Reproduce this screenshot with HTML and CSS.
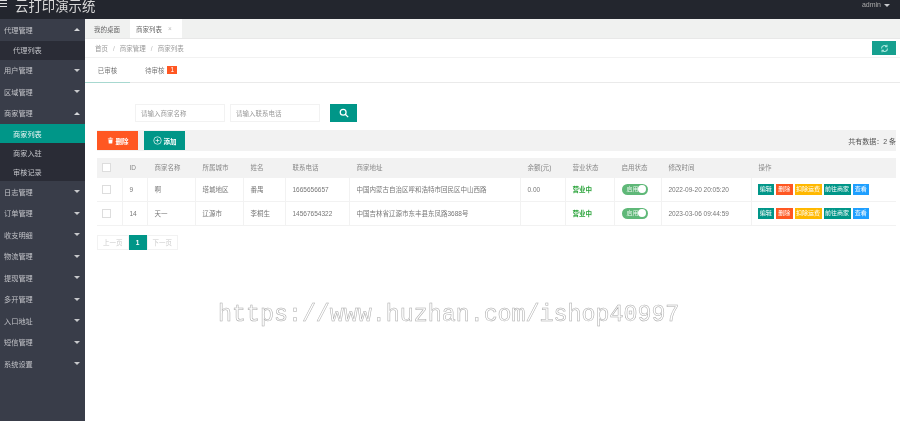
FILE: index.html
```html
<!DOCTYPE html>
<html lang="zh">
<head>
  <meta charset="UTF-8" />
  <meta name="viewport" content="width=device-width, initial-scale=1.0"/>
  <title>云打印演示统</title>
  <link rel="stylesheet" href="styles.css">
</head>
<body>
  <!-- 顶部 -->
  <div class="header">
    <div class="burger"><i></i><i></i><i></i></div>
    <div class="logo">云打印演示统</div>
    <div class="user">admin <span class="arrow-down"></span></div>
  </div>

  <div class="main">
    <!-- 左侧菜单 -->
    <div class="side">
      <div class="nav-item">代理管理<span class="arrow-up"></span></div>
      <div class="nav-sub">代理列表</div>
      <div class="nav-item">用户管理<span class="arrow-down"></span></div>
      <div class="nav-item">区域管理<span class="arrow-down"></span></div>
      <div class="nav-item">商家管理<span class="arrow-up"></span></div>
      <div class="nav-sub active">商家列表</div>
      <div class="nav-sub">商家入驻</div>
      <div class="nav-sub">审核记录</div>
      <div class="nav-item">日志管理<span class="arrow-down"></span></div>
      <div class="nav-item">订单管理<span class="arrow-down"></span></div>
      <div class="nav-item">收支明细<span class="arrow-down"></span></div>
      <div class="nav-item">物流管理<span class="arrow-down"></span></div>
      <div class="nav-item">提现管理<span class="arrow-down"></span></div>
      <div class="nav-item">多开管理<span class="arrow-down"></span></div>
      <div class="nav-item">入口地址<span class="arrow-down"></span></div>
      <div class="nav-item">短信管理<span class="arrow-down"></span></div>
      <div class="nav-item">系统设置<span class="arrow-down"></span></div>
    </div>

    <!-- 内容 -->
    <div class="content">
      <div class="page-tabs">
        <div class="page-tab">我的桌面</div>
        <div class="page-tab current">商家列表 <span class="close">×</span></div>
      </div>

      <div class="crumb">
        <span>首页</span><em>/</em><span>商家管理</span><em>/</em><span>商家列表</span>
        <button class="refresh">
          <svg width="9" height="9" viewBox="0 0 24 24" fill="none" stroke="#a8e6dd" stroke-width="3">
            <path d="M4 12a8 8 0 0 1 14-5.300M20 12a8 8 0 0 1-14 5.300"/>
            <path d="M18.500 2v5h-5M5.500 22v-5h5"/>
          </svg>
        </button>
      </div>

      <div class="sub-tabs">
        <div class="sub-tab current">已审核</div>
        <div class="sub-tab">待审核<span class="badge">1</span></div>
      </div>

      <div class="search">
        <input type="text" placeholder="请输入商家名称">
        <input type="text" placeholder="请输入联系电话">
        <button class="search-btn">
          <svg width="10" height="10" viewBox="0 0 24 24" fill="none" stroke="#fff" stroke-width="3">
            <circle cx="10" cy="10" r="7"/>
            <path d="M15 15l7 7"/>
          </svg>
        </button>
      </div>

      <div class="toolbar">
        <button class="btn btn-del">
          <svg width="7" height="7" viewBox="0 0 24 24" fill="#fff"><path d="M3 5h18v3H3zM9 2h6v2H9zM5 9h14l-1 13H6z"/></svg>
          删除
        </button>
        <button class="btn btn-add">
          <svg width="9" height="9" viewBox="0 0 24 24" fill="none" stroke="#fff" stroke-width="1.800"><circle cx="12" cy="12" r="10"/><path d="M12 7v10M7 12h10"/></svg>
          添加
        </button>
        <span class="total">共有数据：2 条</span>
      </div>

      <table class="list">
        <colgroup>
          <col class="c-check"><col class="c-id"><col class="c-name"><col class="c-city"><col class="c-person">
          <col class="c-phone"><col class="c-addr"><col class="c-money"><col class="c-open"><col class="c-state">
          <col class="c-time"><col>
        </colgroup>
        <thead>
          <tr>
            <th><span class="check"></span></th>
            <th>ID</th><th>商家名称</th><th>所属城市</th><th>姓名</th><th>联系电话</th><th>商家地址</th>
            <th>余额(元)</th><th>营业状态</th><th>启用状态</th><th>修改时间</th><th>操作</th>
          </tr>
        </thead>
        <tbody>
          <tr>
            <td><span class="check"></span></td>
            <td>9</td><td>啊</td><td>塔城地区</td><td>番禺</td><td>1665656657</td>
            <td>中国内蒙古自治区呼和浩特市回民区中山西路</td><td>0.00</td>
            <td class="open">营业中</td>
            <td><span class="switch">启用<i></i></span></td>
            <td>2022-09-20 20:05:20</td>
            <td class="ops"><b class="op green">编辑</b><b class="op orange">删除</b><b class="op yellow">扣除运费</b><b class="op green">前往商家</b><b class="op blue">查看</b></td>
          </tr>
          <tr>
            <td><span class="check"></span></td>
            <td>14</td><td>天一</td><td>辽源市</td><td>李桐生</td><td>14567654322</td>
            <td>中国吉林省辽源市东丰县东凤路3688号</td><td></td>
            <td class="open">营业中</td>
            <td><span class="switch">启用<i></i></span></td>
            <td>2023-03-06 09:44:59</td>
            <td class="ops"><b class="op green">编辑</b><b class="op orange">删除</b><b class="op yellow">扣除运费</b><b class="op green">前往商家</b><b class="op blue">查看</b></td>
          </tr>
        </tbody>
      </table>

      <div class="pager">
        <span class="page">上一页</span><span class="page now">1</span><span class="page">下一页</span>
      </div>
    </div>
  </div>

  <!-- 水印 -->
  <div class="mark">https://www.huzhan.com/ishop40997</div>
</body>
</html>
```

FILE: styles.css
```css
* {
  box-sizing: border-box;
}
body {
  margin: 0;
  height: 421px;
  overflow: hidden;
  display: flex;
  flex-direction: column;
  font-family: "Liberation Sans", "Noto Sans CJK SC", sans-serif;
  font-size: 6.5px;
  color: #777;
  background: #fff;
  filter: blur(0.35px);
}
button {
  border: none;
  padding: 0;
  font-family: inherit;
}

/* header */
.header {
  height: 19px;
  flex: none;
  display: flex;
  align-items: flex-start;
  background: #23262e;
}
.burger {
  width: 7px;
  margin-right: 8px;
  display: flex;
  flex-direction: column;
  gap: 2px;
}
.burger i {
  height: 1px;
  background: #ddd;
}
.logo {
  font-size: 13.4px;
  line-height: 13px;
  color: #d8d8d8;
}
.user {
  margin-left: auto;
  margin-right: 10px;
  line-height: 10px;
  font-size: 7px;
  color: #aaa;
  display: flex;
  align-items: center;
  gap: 3px;
}
.arrow-down,
.arrow-up {
  width: 0;
  height: 0;
  border-left: 3px solid transparent;
  border-right: 3px solid transparent;
}
.arrow-down {
  border-top: 3px solid #c8c9cc;
}
.arrow-up {
  border-bottom: 3px solid #d6d7da;
}

.main {
  flex: 1;
  display: flex;
  min-height: 0;
}

/* sidebar */
.side {
  width: 85px;
  flex: none;
  background: #393d49;
  color: #c2c3c8;
  font-size: 7.2px;
}
.nav-item {
  height: 21.5px;
  padding: 0 5px 0 4px;
  display: flex;
  align-items: center;
  justify-content: space-between;
}
.nav-sub {
  height: 19px;
  padding-left: 13px;
  display: flex;
  align-items: center;
  background: #2a2c36;
}
.nav-sub.active {
  background: #009688;
  color: #e6f5f3;
}

/* content */
.content {
  flex: 1;
  min-width: 0;
  display: flex;
  flex-direction: column;
}
.page-tabs {
  height: 20px;
  flex: none;
  display: flex;
  background: #f0f1f0;
  border-bottom: 1px solid #e8e8e8;
}
.page-tab {
  width: 45px;
  padding-left: 9px;
  display: flex;
  align-items: center;
  color: #666;
  white-space: nowrap;
}
.page-tab.current {
  width: 52px;
  gap: 6px;
  padding-left: 6px;
  background: #fff;
}
.close {
  color: #bbb;
}
.crumb {
  height: 19px;
  flex: none;
  padding: 0 4px 0 10px;
  display: flex;
  align-items: center;
  border-bottom: 1px solid #f2f2f2;
  color: #999;
}
.crumb em {
  margin: 0 5px;
  font-style: normal;
  color: #bbb;
}
.refresh {
  width: 24px;
  height: 14px;
  margin-left: auto;
  background: #16a08f;
  display: flex;
  align-items: center;
  justify-content: center;
}
.sub-tabs {
  height: 25px;
  flex: none;
  display: flex;
  border-bottom: 1px solid #eaeaea;
}
.sub-tab {
  width: 45px;
  display: flex;
  align-items: center;
  justify-content: center;
  color: #777;
}
.sub-tab.current {
  border-bottom: 1px solid #a7d8d0;
  margin-bottom: -1px;
}
.sub-tab + .sub-tab {
  width: 62px;
}
.badge {
  margin-left: 3px;
  padding: 0 3px;
  line-height: 8px;
  background: #ff5722;
  color: #fff;
}
.search {
  flex: none;
  margin: 21px 0 0 50px;
  height: 18px;
  display: flex;
}
.search input {
  width: 90px;
  height: 18px;
  margin-right: 5px;
  padding: 0 5px;
  border: 1px solid #f2f2f2;
  outline: none;
  font: inherit;
}
.search input::placeholder {
  color: #999;
}
.search-btn {
  width: 27px;
  height: 18px;
  margin-left: 5px;
  background: #009688;
  display: flex;
  align-items: center;
  justify-content: center;
}
.toolbar {
  flex: none;
  margin: 8px 4px 0 12px;
  height: 21px;
  background: #f2f2f2;
  display: flex;
  align-items: center;
  gap: 6px;
}
.btn {
  width: 41px;
  height: 19px;
  display: flex;
  align-items: center;
  justify-content: center;
  gap: 2px;
  color: #fff;
  font-size: 6.5px;
  font-weight: bold;
}
.btn-del {
  background: #ff5722;
}
.btn-add {
  background: #009688;
}
.total {
  margin-left: auto;
  font-size: 7px;
  color: #555;
}

/* table */
.list {
  flex: none;
  width: 799px;
  margin: 7px 0 0 12px;
  border-collapse: collapse;
  table-layout: fixed;
}
.c-check { width: 25px; }
.c-id { width: 25px; }
.c-name { width: 48px; }
.c-city { width: 48px; }
.c-person { width: 42px; }
.c-phone { width: 64px; }
.c-addr { width: 171px; }
.c-money { width: 45px; }
.c-open { width: 49px; }
.c-state { width: 47px; }
.c-time { width: 90px; }
.list th,
.list td {
  padding: 0 7px;
  text-align: left;
  font-weight: normal;
  white-space: nowrap;
  border-bottom: 1px solid #f2f2f2;
  border-right: 1px solid #f2f2f2;
}
.list th {
  height: 19px;
  background: #f2f2f2;
  color: #888;
}
.list td {
  height: 24px;
}
.list th:first-child,
.list td:first-child {
  padding: 0 0 0 5px;
}
.check {
  display: block;
  width: 9px;
  height: 9px;
  border: 1px solid #ddd;
  background: #fff;
}
.list .open {
  color: #2aa33a;
  font-weight: bold;
}
.switch {
  position: relative;
  display: block;
  width: 26px;
  height: 11px;
  padding-left: 5px;
  border-radius: 6px;
  background: #5fb878;
  color: #e8f5ec;
  line-height: 11px;
  font-size: 6px;
}
.switch i {
  position: absolute;
  top: 1.5px;
  right: 1.5px;
  width: 8px;
  height: 8px;
  border-radius: 50%;
  background: #fff;
}
.list .ops {
  padding: 0 0 0 6px;
  border-right: none;
}
.op {
  display: inline-block;
  min-width: 16.5px;
  height: 11px;
  margin-right: 2px;
  padding: 0 1.5px;
  line-height: 11px;
  font-size: 6px;
  font-weight: normal;
  color: #fff;
  text-align: center;
}
.green { background: #009688; }
.orange { background: #ff5722; }
.yellow { background: #ffb800; }
.blue { background: #1e9fff; }

.pager {
  margin: 9px 0 0 12px;
  display: flex;
}
.page {
  height: 15px;
  padding: 0 5px;
  display: flex;
  align-items: center;
  border: 1px solid #f2f2f2;
  color: #ccc;
}
.page.now {
  width: 18px;
  justify-content: center;
  background: #009688;
  border-color: #009688;
  color: #fff;
  font-weight: bold;
}

/* watermark */
.mark {
  position: absolute;
  left: 218px;
  top: 299px;
  font-family: "Liberation Mono", monospace;
  font-size: 23.3px;
  line-height: 32px;
  color: #fff;
  -webkit-text-stroke: 0.5px #a8a8a8;
  white-space: nowrap;
}
```
